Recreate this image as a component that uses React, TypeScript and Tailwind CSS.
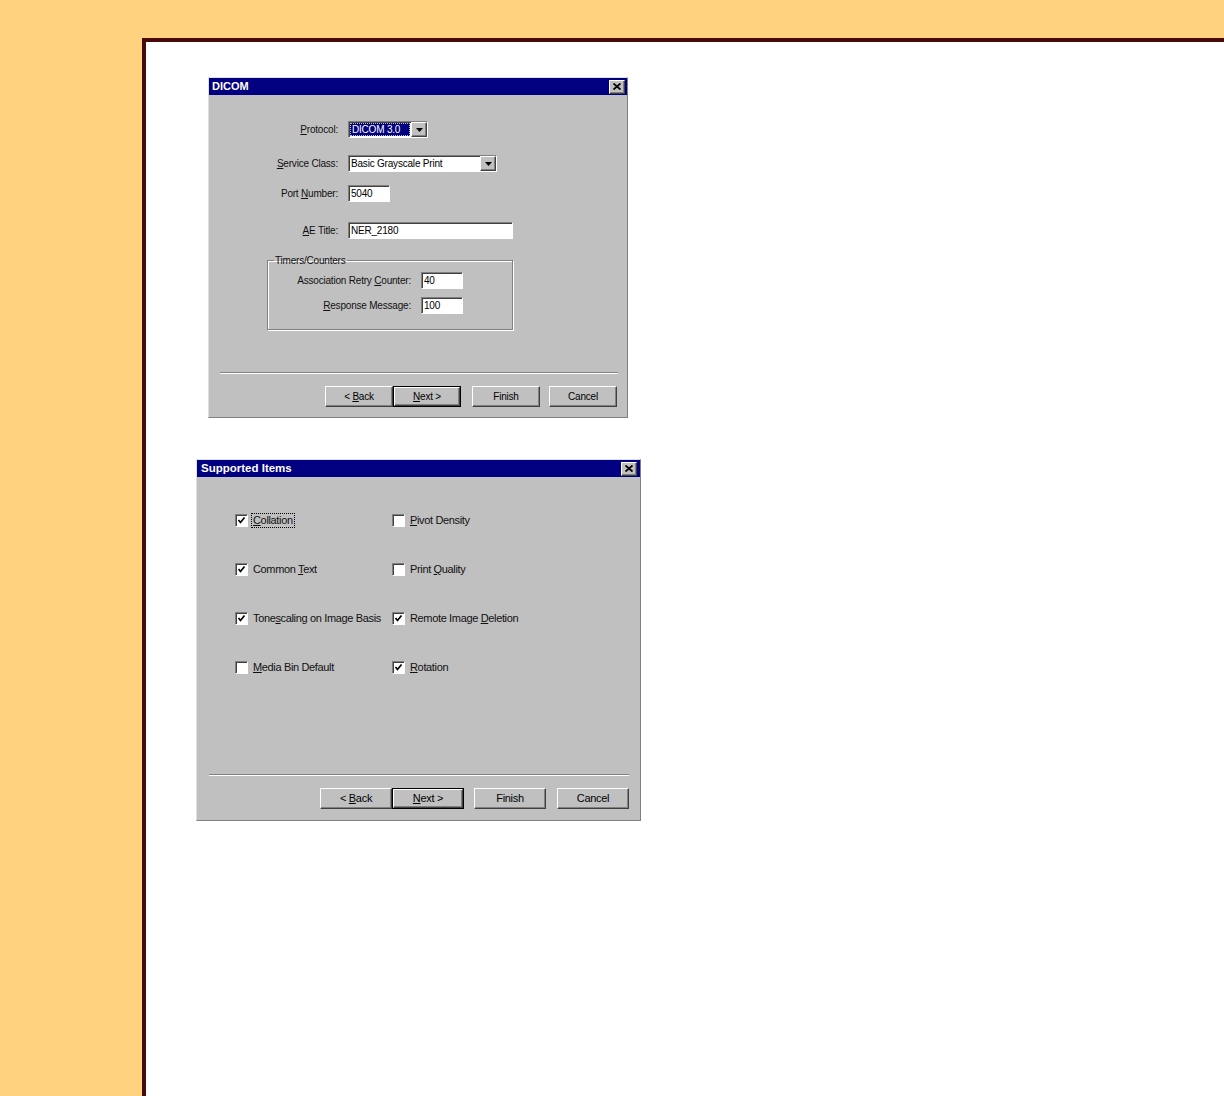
import React from 'react';

const raised =
  'border border-t-white border-l-white border-r-[#404040] border-b-[#404040] shadow-[inset_-1px_-1px_0_#808080]';
const sunken =
  'border border-t-[#808080] border-l-[#808080] border-r-white border-b-white shadow-[inset_1px_1px_0_#404040]';

const CloseButton: React.FC<{ className?: string }> = ({ className = '' }) => (
  <div className={`w-[16px] h-[14px] bg-[#c0c0c0] flex items-center justify-center ${raised} ${className}`}>
    <svg width="8" height="7" viewBox="0 0 8 7">
      <path d="M0.5 0.5 L7.5 6.5 M7.5 0.5 L0.5 6.5" stroke="#000" strokeWidth="1.8" />
    </svg>
  </div>
);

const TitleBar: React.FC<{ title: string; size: string; pad: string; closeMr: string }> = ({ title, size, pad, closeMr }) => (
  <div className={`h-[17px] bg-[#000080] flex items-center justify-between ${pad}`}>
    <span className={`text-white font-bold leading-none ${size}`}>{title}</span>
    <CloseButton className={closeMr} />
  </div>
);

const DropArrow = () => (
  <div className={`w-[16px] h-full bg-[#c0c0c0] flex items-center justify-center ${raised}`}>
    <svg width="7" height="4" viewBox="0 0 7 4">
      <path d="M0 0 H7 L3.5 4 Z" fill="#000" />
    </svg>
  </div>
);

const Separator: React.FC<{ className?: string }> = ({ className = '' }) => (
  <div className={`h-[2px] border-t border-t-[#808080] border-b border-b-white ${className}`} />
);

const Button: React.FC<{ children: React.ReactNode; w: string; isDefault?: boolean; text: string }> = ({
  children,
  w,
  isDefault,
  text,
}) =>
  isDefault ? (
    <div className={`${w} h-[21px] border border-black flex`}>
      <div className={`flex-1 bg-[#c0c0c0] flex items-center justify-center ${raised} ${text}`}>
        <span>{children}</span>
      </div>
    </div>
  ) : (
    <div className={`${w} h-[21px] bg-[#c0c0c0] flex items-center justify-center ${raised} ${text}`}>
      <span>{children}</span>
    </div>
  );

const TextBox: React.FC<{ value: string; w: string }> = ({ value, w }) => (
  <div className={`${w} h-[17px] bg-white flex items-center pl-[2px] text-[10px] tracking-[-0.2px] ${sunken}`}>{value}</div>
);

const Row: React.FC<{ label: React.ReactNode; labelW: string; className?: string; children: React.ReactNode }> = ({
  label,
  labelW,
  className = '',
  children,
}) => (
  <div className={`flex items-center ${className}`}>
    <div className={`${labelW} text-right text-[10px] tracking-[-0.2px] text-[#111]`}>{label}</div>
    <div className="ml-[10px]">{children}</div>
  </div>
);

const Check = () => (
  <svg width="9" height="9" viewBox="0 0 9 9">
    <path d="M1.5 4 L3.5 6.5 L7.5 1.5" stroke="#000" strokeWidth="1.7" fill="none" />
  </svg>
);

const CheckItem: React.FC<{ checked?: boolean; focused?: boolean; children: React.ReactNode }> = ({
  checked,
  focused,
  children,
}) => (
  <div className="flex items-center h-[13px]">
    <div className={`w-[13px] h-[13px] bg-white flex items-center justify-center ${sunken}`}>{checked && <Check />}</div>
    <span
      className={`ml-[3px] text-[11px] tracking-[-0.35px] leading-[13px] px-[1px] text-[#111] ${
        focused ? 'border border-dotted border-black' : 'border border-transparent'
      }`}
    >
      {children}
    </span>
  </div>
);

const DicomDialog = () => (
  <div className="w-[420px] bg-[#c0c0c0] border border-t-[#dfdfdf] border-l-[#dfdfdf] border-r-[#808080] border-b-[#808080] ml-[12px]">
    <TitleBar title="DICOM" size="text-[11px]" pad="pl-[3px]" closeMr="mr-[2px]" />

    <Row labelW="w-[129px]" className="mt-[26px]" label={<><u>P</u>rotocol:</>}>
      <div className={`w-[80px] h-[17px] bg-white flex ${sunken}`}>
        <div className="flex-1 m-[1px] bg-[#000080] outline outline-1 outline-dotted outline-[#c0c0c0] -outline-offset-1 flex items-center pl-[2px] text-white text-[10px] tracking-[-0.2px]">
          DICOM 3.0
        </div>
        <DropArrow />
      </div>
    </Row>

    <Row labelW="w-[129px]" className="mt-[17px]" label={<><u>S</u>ervice Class:</>}>
      <div className={`w-[149px] h-[17px] bg-white flex ${sunken}`}>
        <div className="flex-1 flex items-center pl-[2px] text-[10px] tracking-[-0.2px]">Basic Grayscale Print</div>
        <DropArrow />
      </div>
    </Row>

    <Row labelW="w-[129px]" className="mt-[13px]" label={<>Port <u>N</u>umber:</>}>
      <TextBox value="5040" w="w-[42px]" />
    </Row>

    <Row labelW="w-[129px]" className="mt-[20px]" label={<><u>A</u>E Title:</>}>
      <TextBox value="NER_2180" w="w-[165px]" />
    </Row>

    <fieldset className="ml-[58px] mt-[16px] w-[246px] border border-[#808080] shadow-[inset_1px_1px_0_#fff,1px_1px_0_#fff] pb-[15px]">
      <legend className="ml-[6px] px-[1px] text-[10px] tracking-[-0.2px] leading-[11px] text-[#111]">Timers/Counters</legend>
      <Row labelW="w-[143px]" className="mt-[6px]" label={<>Association Retry <u>C</u>ounter:</>}>
        <TextBox value="40" w="w-[42px]" />
      </Row>
      <Row labelW="w-[143px]" className="mt-[8px]" label={<><u>R</u>esponse Message:</>}>
        <TextBox value="100" w="w-[42px]" />
      </Row>
    </fieldset>

    <Separator className="mt-[42px] ml-[11px] mr-[9px]" />

    <div className="flex justify-end pr-[10px] mt-[12px] pb-[10px]">
      <Button w="w-[68px]" text="text-[10px] tracking-[-0.2px]">
        &lt; <u>B</u>ack
      </Button>
      <Button w="w-[68px]" text="text-[10px] tracking-[-0.2px]" isDefault>
        <u>N</u>ext &gt;
      </Button>
      <div className="ml-[11px]">
        <Button w="w-[68px]" text="text-[10px] tracking-[-0.2px]">Finish</Button>
      </div>
      <div className="ml-[9px]">
        <Button w="w-[68px]" text="text-[10px] tracking-[-0.2px]">Cancel</Button>
      </div>
    </div>
  </div>
);

const SupportedDialog = () => (
  <div className="w-[445px] bg-[#c0c0c0] border border-t-[#dfdfdf] border-l-[#dfdfdf] border-r-[#808080] border-b-[#808080] mt-[41px]">
    <TitleBar title="Supported Items" size="text-[11.5px]" pad="pl-[4px]" closeMr="mr-[3px]" />

    <div className="grid grid-cols-[157px_1fr] gap-y-[36px] pl-[38px] mt-[37px]">
      <CheckItem checked focused>
        <u>C</u>ollation
      </CheckItem>
      <CheckItem>
        <u>P</u>ivot Density
      </CheckItem>
      <CheckItem checked>
        Common <u>T</u>ext
      </CheckItem>
      <CheckItem>
        Print <u>Q</u>uality
      </CheckItem>
      <CheckItem checked>
        Tone<u>s</u>caling on Image Basis
      </CheckItem>
      <CheckItem checked>
        Remote Image <u>D</u>eletion
      </CheckItem>
      <CheckItem>
        <u>M</u>edia Bin Default
      </CheckItem>
      <CheckItem checked>
        <u>R</u>otation
      </CheckItem>
    </div>

    <Separator className="mt-[100px] ml-[12px] mr-[11px]" />

    <div className="flex justify-end pr-[11px] mt-[12px] pb-[11px]">
      <Button w="w-[72px]" text="text-[11px] tracking-[-0.3px]">
        &lt; <u>B</u>ack
      </Button>
      <Button w="w-[72px]" text="text-[11px] tracking-[-0.3px]" isDefault>
        <u>N</u>ext &gt;
      </Button>
      <div className="ml-[10px]">
        <Button w="w-[72px]" text="text-[11px] tracking-[-0.3px]">Finish</Button>
      </div>
      <div className="ml-[11px]">
        <Button w="w-[72px]" text="text-[11px] tracking-[-0.3px]">Cancel</Button>
      </div>
    </div>
  </div>
);

const App: React.FC = () => (
  <div className="h-[1096px] overflow-hidden bg-[#ffd27f] flex flex-col font-['Liberation_Sans',Arial,sans-serif] text-black">
    <div className="h-[38px] shrink-0" />
    <div className="flex flex-1">
      <div className="w-[142px] shrink-0" />
      <div className="flex-1 bg-white border-l-4 border-t-4 border-[#4a0a0a] pl-[50px] pt-[35px] flex flex-col items-start">
        <DicomDialog />
        <SupportedDialog />
      </div>
    </div>
  </div>
);

export default App;
